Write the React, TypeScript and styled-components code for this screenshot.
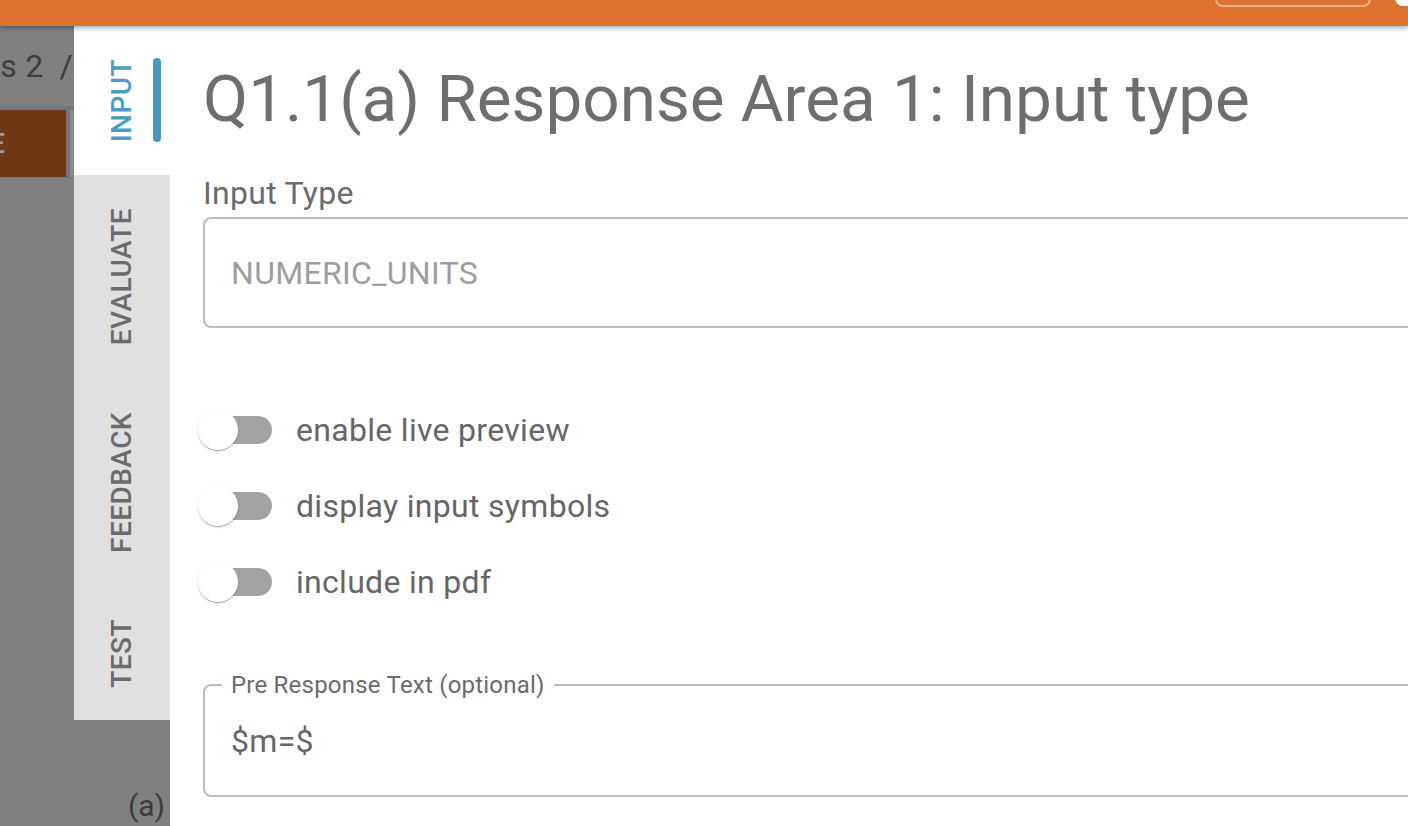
import * as React from "react"
import styled, { createGlobalStyle } from "styled-components"

const GlobalStyle = createGlobalStyle`
  html, body {
    margin: 0;
    padding: 0;
    height: 100%;
    overflow: hidden;
    background: #808080;
  }
  body {
    font-family: Roboto, "Liberation Sans", Arial, sans-serif;
  }
  #root {
    height: 100%;
  }
`

const Page = styled.div`
  display: flex;
  flex-direction: column;
  height: 826px;
  overflow: hidden;
`

const Header = styled.header`
  position: relative;
  z-index: 2;
  flex: 0 0 26px;
  display: flex;
  justify-content: flex-end;
  align-items: flex-start;
  background: #e0722f;
  box-shadow: 0 2px 5px rgba(0, 0, 0, 0.35);
  overflow: hidden;
`

const HeaderButton = styled.div`
  width: 152px;
  height: 40px;
  margin-top: -37px;
  margin-right: 24px;
  border: 2px solid #f2b189;
  border-radius: 8px;
`

const HeaderChip = styled.div`
  width: 24px;
  height: 20px;
  margin-top: -14px;
  margin-right: -11px;
  border-radius: 8px;
  background: #fff;
`

const Body = styled.div`
  flex: 1;
  display: flex;
  min-height: 0;
`

const Backdrop = styled.div`
  flex: 0 0 74px;
  display: flex;
  flex-direction: column;
  background: #808080;
  overflow: hidden;
`

const Crumbs = styled.div`
  display: flex;
  justify-content: flex-end;
  align-items: center;
  height: 80px;
  padding-right: 1px;
  white-space: nowrap;
  font-size: 32px;
  letter-spacing: 0.3px;
  color: #3c3c3c;
`

const Slash = styled.span`
  margin-left: 16px;
`

const ActionBar = styled.div`
  display: flex;
  gap: 4px;
  height: 72px;
  padding: 4px 0 1px;
  box-sizing: border-box;
  background: #747474;
`

const DimButton = styled.div`
  flex: 0 0 66px;
  display: flex;
  justify-content: flex-end;
  align-items: center;
  padding-right: 61px;
  box-sizing: border-box;
  overflow: hidden;
  white-space: nowrap;
  background: #6d3a15;
  color: #9a9a9a;
  font-size: 28px;
  font-weight: 500;
`

const DimEdge = styled.div`
  flex: 1;
  background: #8a8a8a;
`

const Dialog = styled.div`
  flex: 1;
  display: flex;
  min-width: 0;
`

const TabColumn = styled.div`
  flex: 0 0 96px;
  display: flex;
  flex-direction: column;
`

const TabList = styled.div`
  display: flex;
  flex-direction: column;
  background: #e0e0e0;
`

const Tab = styled.div<{ $active?: boolean }>`
  position: relative;
  display: flex;
  justify-content: center;
  padding: 33px 0;
  background: ${p => (p.$active ? "#ffffff" : "transparent")};
  color: ${p => (p.$active ? "#4a9bc9" : "#6b6b6b")};
`

const TabLabel = styled.span`
  writing-mode: vertical-rl;
  transform: rotate(180deg);
  font-size: 28px;
  font-weight: 500;
  letter-spacing: 0.45px;
  line-height: 1;
  text-transform: uppercase;
`

const Indicator = styled.span`
  position: absolute;
  top: 32px;
  bottom: 33px;
  right: 9px;
  width: 8px;
  border-radius: 4px;
  background: #4797c4;
`

const TabFiller = styled.div`
  flex: 1;
  display: flex;
  justify-content: flex-end;
  align-items: flex-end;
  padding: 0 5px 2px 0;
  background: #808080;
  color: #3c3c3c;
  font-size: 30px;
  line-height: 36px;
`

const Content = styled.main`
  flex: 1;
  min-width: 0;
  padding: 33px 0 0 33px;
  background: #fff;
  overflow: hidden;
`

const Form = styled.div`
  width: 1320px;
  display: flex;
  flex-direction: column;
`

const Title = styled.h1`
  margin: 0;
  font-size: 65.6px;
  font-weight: 400;
  line-height: 80px;
  color: #6e6e6e;
  white-space: nowrap;
`

const FieldLabel = styled.div`
  margin-top: 35px;
  font-size: 32px;
  line-height: 38px;
  letter-spacing: 0.3px;
  color: #6b6b6b;
`

const SelectBox = styled.div`
  margin-top: 5px;
  height: 111px;
  box-sizing: border-box;
  display: flex;
  align-items: center;
  padding-left: 26px;
  border: 2px solid #bcbcbc;
  border-radius: 8px;
  font-size: 32px;
  letter-spacing: 0.3px;
  color: #9e9e9e;
`

const Toggles = styled.div`
  display: flex;
  flex-direction: column;
  margin-top: 64px;
`

const ToggleRow = styled.label`
  display: flex;
  align-items: center;
  height: 76px;
  font-size: 32px;
  letter-spacing: 0.3px;
  color: #666;
`

const Track = styled.span`
  position: relative;
  flex: 0 0 68px;
  height: 28px;
  margin-left: 1px;
  margin-right: 24px;
  border-radius: 14px;
  background: #a3a3a3;
`

const Thumb = styled.span`
  position: absolute;
  left: -6px;
  top: -6px;
  width: 40px;
  height: 40px;
  border-radius: 50%;
  background: #fff;
  box-shadow: 0 2px 1px -1px rgba(0, 0, 0, 0.2), 0 1px 1px 0 rgba(0, 0, 0, 0.14),
    0 1px 3px 0 rgba(0, 0, 0, 0.12);
`

const Outlined = styled.fieldset`
  margin: 51px 0 0;
  padding: 0 26px 35px;
  border: 2px solid #bcbcbc;
  border-radius: 8px;
  min-width: 0;
`

const Legend = styled.legend`
  margin-left: -9px;
  padding: 0 9px;
  font-size: 24px;
  line-height: 28px;
  letter-spacing: 0.22px;
  color: #6b6b6b;
`

const FieldValue = styled.div`
  padding-top: 23px;
  font-size: 32px;
  line-height: 38px;
  letter-spacing: 0.3px;
  color: #666;
`

const tabs = ["Input", "Evaluate", "Feedback", "Test"]
const toggles = ["enable live preview", "display input symbols", "include in pdf"]

const Switch = () => (
  <Track>
    <Thumb />
  </Track>
)

export default function App() {
  return (
    <Page>
      <GlobalStyle />
      <Header>
        <HeaderButton />
        <HeaderChip />
      </Header>
      <Body>
        <Backdrop>
          <Crumbs>
            Physics 2<Slash>/</Slash>
          </Crumbs>
          <ActionBar>
            <DimButton>SAVE</DimButton>
            <DimEdge />
          </ActionBar>
        </Backdrop>
        <Dialog>
          <TabColumn>
            <TabList>
              {tabs.map((t, i) => (
                <Tab key={t} $active={i === 0}>
                  <TabLabel>{t}</TabLabel>
                  {i === 0 && <Indicator />}
                </Tab>
              ))}
            </TabList>
            <TabFiller>(a)</TabFiller>
          </TabColumn>
          <Content>
            <Form>
              <Title>Q1.1(a) Response Area 1: Input type</Title>
              <FieldLabel>Input Type</FieldLabel>
              <SelectBox>NUMERIC_UNITS</SelectBox>
              <Toggles>
                {toggles.map(t => (
                  <ToggleRow key={t}>
                    <Switch />
                    {t}
                  </ToggleRow>
                ))}
              </Toggles>
              <Outlined>
                <Legend>Pre Response Text (optional)</Legend>
                <FieldValue>$m=$</FieldValue>
              </Outlined>
            </Form>
          </Content>
        </Dialog>
      </Body>
    </Page>
  )
}
